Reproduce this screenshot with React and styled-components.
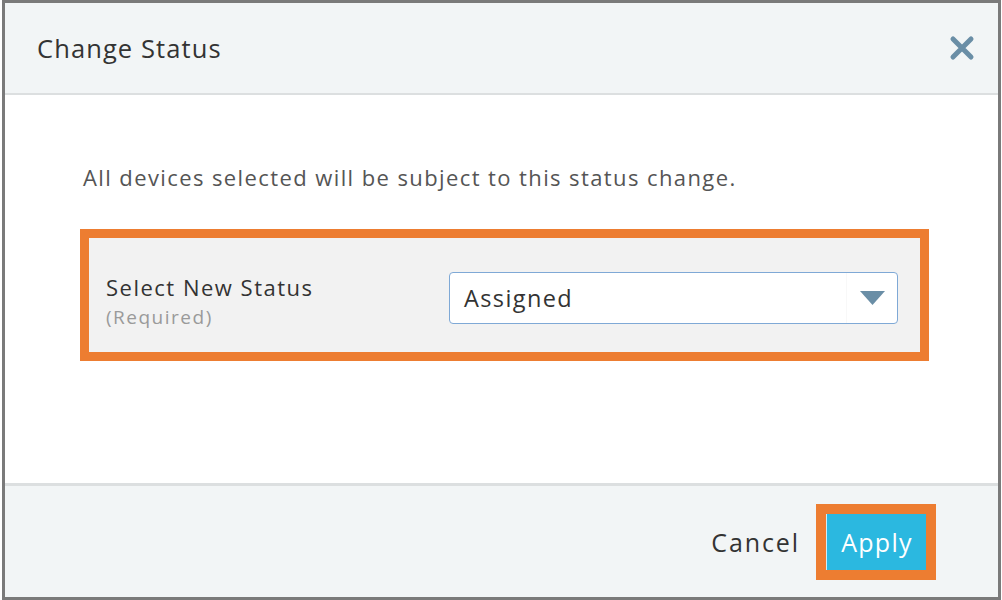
import React from 'react'
import styled, { createGlobalStyle } from 'styled-components'

const GlobalStyle = createGlobalStyle`
  html, body {
    margin: 0;
    padding: 0;
    background: #ffffff;
  }
  body {
    font-family: "Open Sans", Lato, sans-serif;
  }
`

const Frame = styled.div`
  margin-left: 2px;
  width: 999px;
  height: 600px;
  box-sizing: border-box;
  border: 3px solid #7a7a7a;
  display: flex;
  flex-direction: column;
  background: #fff;
`

const Header = styled.div`
  height: 90px;
  flex: none;
  display: flex;
  align-items: center;
  justify-content: space-between;
  padding: 0 21px 0 32px;
  background: #f2f5f6;
  border-bottom: 2px solid #dcdfe0;
`

const Title = styled.h2`
  margin: 0;
  font-size: 25.5px;
  font-weight: 400;
  color: #333;
  letter-spacing: 1.1px;
`

const CloseButton = styled.button`
  border: none;
  background: none;
  padding: 0;
  width: 30px;
  height: 30px;
  display: flex;
  align-items: center;
  justify-content: center;
  cursor: pointer;
`

const Body = styled.div`
  flex: 1;
  padding: 67px 69px 0 75px;
`

const Message = styled.p`
  margin: 0 0 37px 3px;
  font-size: 22px;
  color: #555;
  letter-spacing: 1.4px;
  line-height: 30px;
`

const Highlight = styled.div`
  border: 9px solid #ed7d31;
  background: #f2f2f2;
  height: 114px;
  display: flex;
  align-items: center;
  padding: 0 22px 0 17px;
`

const LabelBlock = styled.div`
  width: 343px;
  padding-top: 16px;
`

const Label = styled.div`
  font-size: 22px;
  color: #333;
  letter-spacing: 1.5px;
  line-height: 28px;
`

const Hint = styled.div`
  font-size: 19px;
  color: #9a9a9a;
  letter-spacing: 1.5px;
  line-height: 32px;
`

const Select = styled.div`
  flex: 1;
  height: 52px;
  box-sizing: border-box;
  border: 1px solid #7fa9d6;
  border-radius: 4px;
  background: #fff;
  display: flex;
  align-items: center;
  margin-top: 6px;
`

const SelectValue = styled.span`
  flex: 1;
  padding-left: 14px;
  font-size: 23.5px;
  color: #333;
  letter-spacing: 1.4px;
`

const Caret = styled.span`
  width: 50px;
  height: 100%;
  border-left: 1px solid #f8f8f8;
  display: flex;
  align-items: center;
  justify-content: center;
`

const Footer = styled.div`
  height: 111px;
  flex: none;
  border-top: 3px solid #dcdfe0;
  background: #f2f5f6;
  display: flex;
  align-items: center;
  justify-content: flex-end;
  padding-right: 62px;
  gap: 16px;
`

const LinkButton = styled.button`
  border: none;
  background: none;
  padding: 0;
  font-family: inherit;
  font-size: 25px;
  color: #333;
  letter-spacing: 1.9px;
  cursor: pointer;
`

const Outline = styled.div`
  border: 10px solid #ed7d31;
  display: flex;
`

const PrimaryButton = styled.button`
  width: 100px;
  height: 56px;
  border: none;
  border-left: 1px solid #cfeef8;
  background: #2bb8e0;
  color: #fff;
  font-family: inherit;
  font-size: 25px;
  letter-spacing: 1.3px;
  padding: 0 0 0 1px;
  cursor: pointer;
`

export default function App() {
  return (
    <>
      <GlobalStyle />
      <Frame>
        <Header>
          <Title>Change Status</Title>
          <CloseButton aria-label="Close">
            <svg width="26" height="26" viewBox="0 0 26 26">
              <path d="M4 4 L22 22 M22 4 L4 22" stroke="#6a8ea6" strokeWidth="5" strokeLinecap="round" />
            </svg>
          </CloseButton>
        </Header>
        <Body>
          <Message>All devices selected will be subject to this status change.</Message>
          <Highlight>
            <LabelBlock>
              <Label>Select New Status</Label>
              <Hint>(Required)</Hint>
            </LabelBlock>
            <Select>
              <SelectValue>Assigned</SelectValue>
              <Caret>
                <svg width="25" height="14" viewBox="0 0 25 14">
                  <path d="M0 0 H25 L12.5 14 Z" fill="#6a8ea6" />
                </svg>
              </Caret>
            </Select>
          </Highlight>
        </Body>
        <Footer>
          <LinkButton>Cancel</LinkButton>
          <Outline>
            <PrimaryButton>Apply</PrimaryButton>
          </Outline>
        </Footer>
      </Frame>
    </>
  )
}
